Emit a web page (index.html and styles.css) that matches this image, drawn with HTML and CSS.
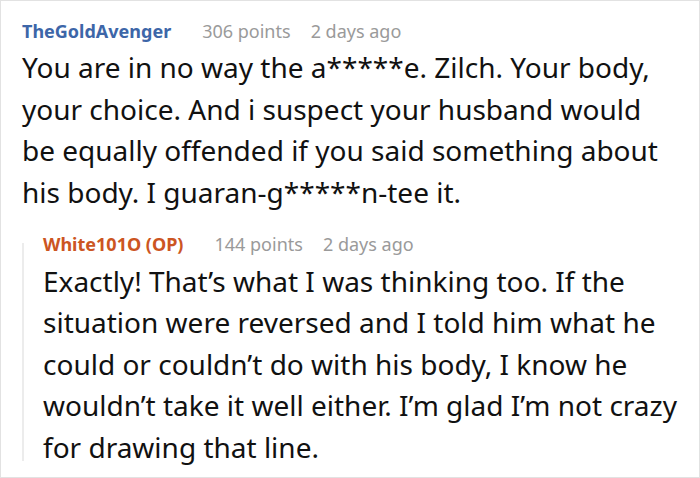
FILE: index.html
```html
<!DOCTYPE html>
<html>
<head>
<meta charset="utf-8">
<link rel="stylesheet" href="styles.css">
</head>
<body>
<div class="frame">
  <div class="comment">
    <div class="meta">
      <span class="author">TheGoldAvenger</span>
      <span class="info">306 points</span>
      <span class="info">2 days ago</span>
    </div>
    <p class="text main-text">You are in no way the a*****e. Zilch. Your body, your choice. And i suspect your husband would be equally offended if you said something about his body. I guaran-g*****n-tee it.</p>
    <div class="reply">
      <div class="reply-body">
        <div class="meta">
          <span class="author op">White101O (OP)</span>
          <span class="info">144 points</span>
          <span class="info">2 days ago</span>
        </div>
        <p class="text">Exactly! That’s what I was thinking too. If the situation were reversed and I told him what he could or couldn’t do with his body, I know he wouldn’t take it well either. I’m glad I’m not crazy for drawing that line.</p>
      </div>
    </div>
  </div>
</div>
</body>
</html>
```
FILE: styles.css
```css
html, body {
  margin: 0;
  padding: 0;
  background: #fff;
}
.frame {
  width: 700px;
  height: 478px;
  box-sizing: border-box;
  border: 1px solid #e2e2e2;
  overflow: hidden;
  font-family: "Noto Sans", "Open Sans", sans-serif;
}
.comment {
  padding: 18.4px 17px 0 21px;
}
.meta {
  display: flex;
  font-size: 18px;
  line-height: 24px;
  height: 24px;
  white-space: nowrap;
}
.author {
  font-weight: bold;
  color: #3d66a8;
  margin-right: 31px;
}
.author.op {
  color: #cc5522;
}
.info {
  color: #9a9a9a;
  margin-right: 20px;
}
.text {
  margin: 4px 0 0 0;
  font-size: 28px;
  line-height: 41.5px;
  color: #111;
}
.main-text {
  padding-right: 14px;
}
.reply {
  display: flex;
  margin-top: 18.5px;
}
.reply::before {
  content: "";
  flex: 0 0 2px;
  background: #ececec;
  margin: 11px 19px 7px 0;
}
.reply-body {
  flex: 1;
  min-width: 0;
}
.reply .text {
  margin-top: 5px;
}
```
